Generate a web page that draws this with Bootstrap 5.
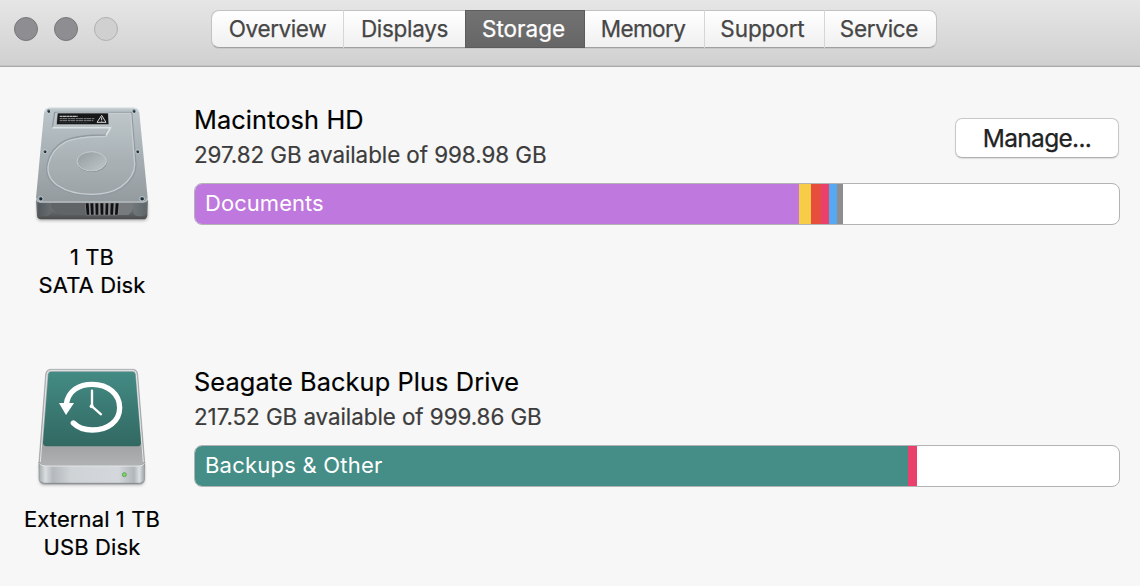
<!DOCTYPE html>
<html lang="en">
<head>
<meta charset="utf-8">
<meta name="viewport" content="width=device-width, initial-scale=1">
<title>Storage</title>
<link href="https://cdn.jsdelivr.net/npm/bootstrap@5.3.0/dist/css/bootstrap.min.css" rel="stylesheet">
<style>
body{background:#f7f7f7;font-family:Inter,"Liberation Sans",sans-serif;color:#000;height:586px;overflow:hidden}
.titlebar{height:67px;padding:10px 0 0 14px;background:linear-gradient(#e6e6e6,#d0d0d0);border-bottom:1px solid #a9a9a9;box-shadow:inset 0 -1px #c4c4c4}
.lights{width:197px;gap:16px;padding-top:7px}
.light{width:24px;height:24px;border-radius:50%;background:#8e8d92;border:1px solid #77767a}
.light.off{background:#d0d0d0;border-color:#b0b0b0}
.tabs{height:38px;border:1px solid #c2c2c2;border-bottom-color:#a0a0a0;border-radius:8px;background:linear-gradient(#fff,#f0f0f0);box-shadow:0 1px 0 #c8c8c8}
.tabs .btn{height:38px;margin-top:-1px;padding:0;border:0;border-radius:0;font-size:22.5px;line-height:38px;color:#464646;-webkit-text-stroke:.25px;letter-spacing:-.3px;border-left:1px solid #d6d6d6}
.tabs .btn:first-child{border-left:0}
.tabs .btn.active{background:linear-gradient(#727272,#666);color:#fff;border:1px solid #5c5c5c;line-height:36px;letter-spacing:0;padding-right:3px}
.tabs .btn.active + .btn{border-left:0;padding-right:3px;letter-spacing:-.6px}
.volume{height:262px}
.disk{width:184px;font-size:22px;line-height:28px;letter-spacing:.1px;-webkit-text-stroke:.2px}
.disk svg{width:135px;height:135px;margin:0 0 13px 1px}
.info{width:926px;margin-left:10px}
.name{font-size:25.3px;line-height:32px;letter-spacing:.12px;-webkit-text-stroke:.2px}
.space{font-size:22.4px;line-height:30px;letter-spacing:-.06px;color:#3c3c3c;-webkit-text-stroke:.2px}
.manage{width:164px;height:40px;margin:23px 1px 0 0;padding:0;background:#fff;border:1px solid #c8c8c8;border-bottom-color:#b0b0b0;border-radius:7px;font-size:24.5px;line-height:38px;letter-spacing:-.7px;color:#222;-webkit-text-stroke:.25px;box-shadow:0 1px 1px #ddd}
.usage{height:42px;background:#fff;border:1px solid #b3b3b3;border-radius:8px;font-size:22px}
.usage .progress-bar{text-align:left;line-height:38px;padding-bottom:2px}
</style>
</head>
<body>
<header class="titlebar d-flex align-items-start">
  <div class="lights d-flex"><span class="light"></span><span class="light"></span><span class="light off"></span></div>
  <nav class="tabs d-flex">
    <button class="btn" style="width:131px"><span style="letter-spacing:-.4px">Overview</span></button>
    <button class="btn" style="width:122px">Displays</button>
    <button class="btn active" style="width:120px">Storage</button>
    <button class="btn" style="width:119px">Memory</button>
    <button class="btn" style="width:120px;letter-spacing:-.1px;padding-right:4px">Support</button>
    <button class="btn" style="width:112px;padding-right:3px">Service</button>
  </nav>
</header>
<main>
  <section class="volume d-flex">
    <div class="disk text-center" style="padding-top:28px">
      <svg viewBox="0 0 405 405">
        <defs>
          <linearGradient id="lid" x1="0" y1="0" x2="0" y2="1"><stop offset="0" stop-color="#bdc6ca"/><stop offset=".5" stop-color="#a6afb3"/><stop offset="1" stop-color="#949b9f"/></linearGradient>
          <linearGradient id="front" x1="0" y1="0" x2="0" y2="1"><stop offset="0" stop-color="#747a7e"/><stop offset=".6" stop-color="#666a6c"/><stop offset="1" stop-color="#4a4b4c"/></linearGradient>
          <linearGradient id="foot" x1="0" y1="0" x2="1" y2="0"><stop offset="0" stop-color="#53585c"/><stop offset=".5" stop-color="#a5adb2"/><stop offset="1" stop-color="#5f666a"/></linearGradient>
          <linearGradient id="hub" x1="0" y1="0" x2="1" y2="1"><stop offset="0" stop-color="#929b9f"/><stop offset="1" stop-color="#c2c8cb"/></linearGradient>
          <filter id="soft" x="-10%" y="-10%" width="120%" height="125%"><feGaussianBlur stdDeviation="4"/></filter>
        </defs>
        <path d="M36 318H368V366Q366 377 356 377H48Q36 377 36 366Z" fill="#777" opacity=".55" filter="url(#soft)"/>
        <path d="M33 316H369L367 362Q365 373 354 373H48Q37 372 36 362Z" fill="url(#front)"/>
        <path d="M77 324H325V340Q322 351 310 360H120Q88 350 77 335Z" fill="#777b7d"/>
        <path d="M77 324H182V360H120Q85 351 77 335Z" fill="#606467"/>
        <path d="M38 322H77V354Q74 364 58 364Q39 364 38 352ZM325 322H365V352Q363 364 345 364Q327 364 325 352Z" fill="url(#foot)"/>
        <path d="M180 324H284L280 361H184Z" fill="#85898b"/>
        <path d="M182 325h9l2 34h-8zM196 325h9l1 34h-8zM211 325h9v34h-8zM226 325h9v34h-8zM242 325h8l-1 34h-8zM257 325h9l-2 34h-8zM272 325h9l-3 34h-8z" fill="#111"/>
        <path d="M72 38H328Q341 39 343 53L368 308Q369 322 356 323H45Q32 322 33 308L57 53Q59 39 72 38Z" fill="url(#lid)"/>
        <path d="M59 52Q61 40 73 39H327Q340 40 342 52" fill="none" stroke="#dce2e5" stroke-width="3"/>
        <path d="M34 309Q35 321 45 321H356Q367 321 367 309" fill="none" stroke="#c4cacd" stroke-width="3"/>
        <path d="M89 52H320L333 208Q333 249 292 279Q254 303 199 302Q133 302 93 273Q58 249 67 205Q76 160 120 137Q155 120 240 120L256 97H82Z" fill="#fff" fill-opacity=".06"/>
        <path d="M89 52H320L333 208Q333 249 292 279Q254 303 199 302Q133 302 93 273Q58 249 67 205Q76 160 120 137Q155 120 240 120L256 97H82Z" fill="none" stroke="#909ba1" stroke-width="4" stroke-linejoin="round"/>
        <path d="M92 55H317L329 208Q329 246 288 275Q254 298 199 298Q137 298 96 270Q62 244 71 206Q80 164 122 141Q158 125 243 124L258 99" fill="none" stroke="#c8cfd2" stroke-width="3.5" stroke-linejoin="round"/>
        <path d="M82 98L256 98L243 120" fill="none" stroke="#dce2e4" stroke-width="5"/>
        <ellipse cx="201" cy="202" rx="44" ry="29" fill="#78858c"/>
        <ellipse cx="200" cy="199" rx="44" ry="29" fill="url(#hub)" stroke="#c4cccf" stroke-width="3"/>
        <path d="M97 54H250L252 89H94Z" fill="#151719" stroke="#ccd2d5" stroke-width="2"/>
        <path d="M104 64H158" stroke="#bbb" stroke-width="4" stroke-dasharray="9 1"/>
        <path d="M104 71H209M104 77H205" stroke="#888" stroke-width="3" stroke-dasharray="7 1 14 2"/>
        <path d="M104 83H190" stroke="#444" stroke-width="2" stroke-dasharray="5 2"/>
        <path d="M230 61L243 82H216Z" fill="none" stroke="#d5d5d5" stroke-width="3"/><path d="M230 67V75M230 77V80" stroke="#ddd" stroke-width="3"/>
        <g fill="#4c626e" stroke="#dbe2e5" stroke-width="2"><circle cx="71" cy="48" r="6"/><circle cx="327" cy="48" r="6"/><circle cx="60" cy="170" r="6"/><circle cx="338" cy="170" r="6"/><circle cx="47" cy="311" r="7"/><circle cx="351" cy="311" r="7"/></g>
        <g fill="#1f2a30"><circle cx="72" cy="50" r="3"/><circle cx="328" cy="50" r="3"/><circle cx="61" cy="171" r="3"/><circle cx="339" cy="171" r="3"/><circle cx="48" cy="312" r="4"/><circle cx="352" cy="312" r="4"/></g>
      </svg>
      <div>1 TB</div><div>SATA Disk</div>
    </div>
    <div class="info" style="padding-top:28px">
      <div class="d-flex justify-content-between" style="height:88px">
        <div style="padding-top:9px"><div class="name">Macintosh HD</div><div class="space" style="margin-top:4px">297.82 GB available of 998.98 GB</div></div>
        <button class="btn manage">Manage...</button>
      </div>
      <div class="progress usage">
        <div class="progress-bar" style="width:604px;background:#bf78dd;padding-left:10px"><span style="letter-spacing:.05px">Documents</span></div>
        <div class="progress-bar" style="width:12px;background:#f7cd48"></div>
        <div class="progress-bar" style="width:10px;background:#e84e3c"></div>
        <div class="progress-bar" style="width:8px;background:#e9416c"></div>
        <div class="progress-bar" style="width:8px;background:#55a9f2"></div>
        <div class="progress-bar" style="width:6px;background:#8e8e8e"></div>
      </div>
    </div>
  </section>
  <section class="volume d-flex">
    <div class="disk text-center" style="padding-top:31px">
      <svg viewBox="0 0 405 405" style="margin-bottom:10px">
        <defs>
          <linearGradient id="top" x1="0" y1="0" x2="0" y2="1"><stop offset="0" stop-color="#b8bbbd"/><stop offset=".8" stop-color="#a3a4a5"/><stop offset="1" stop-color="#b3b4b5"/></linearGradient>
          <linearGradient id="label" x1="0" y1="0" x2="0" y2="1"><stop offset="0" stop-color="#438b84"/><stop offset="1" stop-color="#326862"/></linearGradient>
          <linearGradient id="base" x1="0" y1="0" x2="1" y2="0"><stop offset="0" stop-color="#a6abae"/><stop offset=".06" stop-color="#d9dde0"/><stop offset=".13" stop-color="#b3b8bc"/><stop offset=".3" stop-color="#cfd3d6"/><stop offset=".75" stop-color="#d4d8dc"/><stop offset=".9" stop-color="#b0b6ba"/><stop offset=".95" stop-color="#dce0e3"/><stop offset="1" stop-color="#9ca1a5"/></linearGradient>
        </defs>
        <path d="M43 320H358V364Q356 376 344 376H57Q44 375 43 364Z" fill="#777" opacity=".5" filter="url(#soft)"/>
        <path d="M76 28H325Q336 29 338 42L359 305V325H42V305L62 42Q64 29 76 28Z" fill="url(#top)" stroke="#979b9e" stroke-width="2"/>
        <path d="M46 306L66 43Q67 32 77 31H324Q333 32 334 43L355 306" fill="none" stroke="#e4e7e8" stroke-width="3"/>
        <path d="M42 306Q46 317 60 317H343Q355 317 359 306V356Q358 372 343 372H59Q44 372 42 356Z" fill="url(#base)" stroke="#8f9497" stroke-width="2"/>
        <path d="M44 310Q48 318 60 318H343Q354 318 358 310" fill="none" stroke="#eceeef" stroke-width="3"/>
        <path d="M47 365Q52 370 60 370H343Q351 370 355 365" fill="none" stroke="#85898c" stroke-width="3"/>
        <path d="M78 35H323Q330 36 331 43L348 249Q348 258 339 259H64Q54 258 54 249L70 43Q71 36 78 35Z" fill="url(#label)"/>
        <path d="M124 132C130 92 162 73 202 73C250 73 284 103 284 143C284 183 249 210 202 210C178 210 158 202 145 189" fill="none" stroke="#fff" stroke-width="16" stroke-linecap="round"/>
        <path d="M102 129H147L123 165Z" fill="#fff"/>
        <path d="M201 92V139L228 163" fill="none" stroke="#fff" stroke-width="7" stroke-linecap="round" stroke-linejoin="round"/><circle cx="200" cy="139" r="6" fill="#fff"/>
        <circle cx="298" cy="344" r="6" fill="#70df58" stroke="#6f9a68" stroke-width="3"/>
      </svg>
      <div>External 1 TB</div><div>USB Disk</div>
    </div>
    <div class="info" style="padding-top:28px">
      <div style="height:88px;padding-top:9px"><div class="name">Seagate Backup Plus Drive</div><div class="space" style="margin-top:4px">217.52 GB available of 999.86 GB</div></div>
      <div class="progress usage">
        <div class="progress-bar" style="width:712.5px;background:#448e87;padding-left:10px"><span style="letter-spacing:.22px">Backups &amp; Other</span></div>
        <div class="progress-bar" style="width:9.5px;background:#e9416c"></div>
      </div>
    </div>
  </section>
</main>
<script src="https://cdn.jsdelivr.net/npm/bootstrap@5.3.0/dist/js/bootstrap.bundle.min.js"></script>
</body>
</html>
